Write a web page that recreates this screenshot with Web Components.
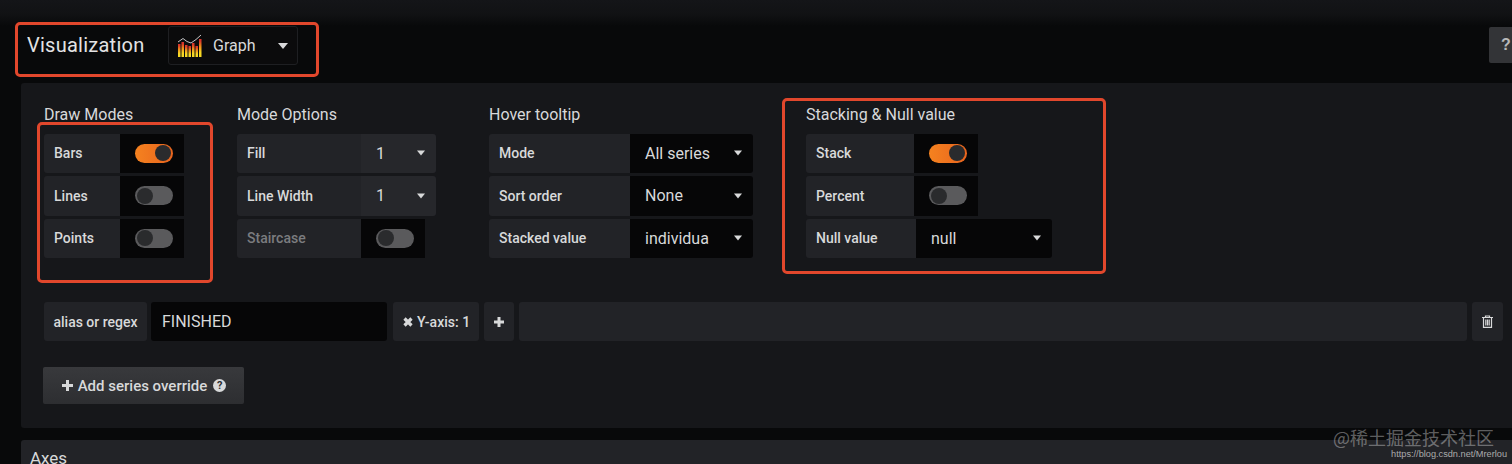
<!DOCTYPE html>
<html>
<head>
<meta charset="utf-8">
<title>Visualization</title>
<style>
  html, body { margin: 0; height: 464px; overflow: hidden; background: #0a0b0c; }
  body { font-family: Roboto, "Noto Sans CJK SC", sans-serif; color: #d8d9da; }
</style>
</head>
<body>
<viz-page>
  <viz-header slot="header"></viz-header>
  <option-panel slot="panel">
    <option-group title="Draw Modes" style="width:193px">
      <switch-row label="Bars" lw="76" on></switch-row>
      <switch-row label="Lines" lw="76"></switch-row>
      <switch-row label="Points" lw="76"></switch-row>
    </option-group>
    <option-group title="Mode Options" style="width:252px">
      <select-row label="Fill" lw="124" vw="75" value="1"></select-row>
      <select-row label="Line Width" lw="124" vw="75" value="1"></select-row>
      <switch-row label="Staircase" lw="124" muted></switch-row>
    </option-group>
    <option-group title="Hover tooltip" style="width:317px">
      <select-row label="Mode" lw="141" vw="123" value="All series" dark></select-row>
      <select-row label="Sort order" lw="141" vw="123" value="None" dark></select-row>
      <select-row label="Stacked value" lw="141" vw="123" value="individua" dark></select-row>
    </option-group>
    <option-group title="Stacking &amp; Null value">
      <switch-row label="Stack" lw="108" on></switch-row>
      <switch-row label="Percent" lw="108"></switch-row>
      <select-row label="Null value" lw="110" vw="136" value="null" dark></select-row>
    </option-group>
    <override-row slot="bottom"></override-row>
    <add-button slot="bottom"></add-button>
  </option-panel>
  <axes-panel slot="axes"></axes-panel>
</viz-page>
<mark-box style="left:15px;top:22px;width:304px;height:55px"></mark-box>
<mark-box style="left:37px;top:122px;width:176px;height:161px"></mark-box>
<mark-box style="left:782px;top:98px;width:324px;height:176px"></mark-box>
<water-mark></water-mark>

<script>
const caret = `<svg width="10" height="6" viewBox="0 0 10 6"><path d="M0 0h10L5 6z" fill="currentColor"/></svg>`;

customElements.define("viz-page", class VizPage extends HTMLElement {
    constructor() {
	super();
	this.attachShadow({ mode: "open" }).innerHTML = `
<style>
  :host { display: flex; flex-direction: column; width: 1512px; height: 464px; overflow: hidden;
	  background: linear-gradient(#141518 0, #111214 14px, #08090a 26px, #08090a 83px); }
  .top { padding: 26px 0 0 0; height: 57px; box-sizing: content-box; }
  .panel { padding-left: 21px; }
  .axes { padding: 12px 0 0 21px; background: #08090a; }
</style>
<div class="top"><slot name="header"></slot></div>
<div class="panel"><slot name="panel"></slot></div>
<div class="axes"><slot name="axes"></slot></div>`;
    }
});

customElements.define("viz-header", class VizHeader extends HTMLElement {
    constructor() {
	super();
	this.attachShadow({ mode: "open" }).innerHTML = `
<style>
  :host { display: flex; align-items: flex-start; height: 57px; padding-left: 27px; }
  h2 { margin: 0; width: 141px; font: 400 20px/39px Roboto, sans-serif; color: #e3e3e4; letter-spacing: .25px; }
  .picker { display: flex; align-items: center; box-sizing: border-box; width: 130px; height: 39px;
	    border: 1px solid #1e1f22; border-radius: 3px; background: #0b0b0c; padding: 0 9px 0 8px; }
  .picker span { flex: 1; margin-left: 10px; font: 400 16px Roboto, sans-serif; color: #d8d9da; }
  .picker svg:last-child { color: #d8d9da; }
  .help { margin-left: auto; width: 23px; height: 36px; margin-top: 1px; background: #333437; border-radius: 2px 0 0 2px;
	  font: 700 16px/36px "Liberation Sans", sans-serif; color: #b8b9ba; padding-left: 12px; box-sizing: border-box; overflow: hidden; }
</style>
<h2>Visualization</h2>
<div class="picker">
  <svg width="26" height="24" viewBox="0 0 26 24">
    <defs><linearGradient id="g" x1="0" y1="0" x2="0" y2="1">
      <stop offset=".1" stop-color="#d8332a"/><stop offset=".4" stop-color="#ee8a1c"/><stop offset=".75" stop-color="#f6d824"/>
    </linearGradient></defs>
    <g fill="url(#g)">
      <rect x="1" y="10" width="2.500" height="13" /><rect x="4.500" y="8" width="2.500" height="15"/>
      <rect x="8" y="11" width="2.500" height="12"/><rect x="11.500" y="12" width="2.500" height="11"/>
      <rect x="15" y="9" width="2.500" height="14"/><rect x="18.500" y="12" width="2.500" height="11"/>
      <rect x="22" y="5" width="2.500" height="18"/>
    </g>
    <path d="M1 8 6 4.500l4 3 4 1.500 5-3.500 5-4.500" fill="none" stroke="#c4c4c6" stroke-width="1"/>
  </svg>
  <span>Graph</span>${caret}
</div>
<div class="help">?</div>`;
    }
});

customElements.define("option-panel", class OptionPanel extends HTMLElement {
    constructor() {
	super();
	this.attachShadow({ mode: "open" }).innerHTML = `
<style>
  :host { display: block; box-sizing: border-box; width: 1491px; height: 345px; padding: 19px 0 0 23px;
	  background: #16171a; border-radius: 3px 0 0 3px; }
  .groups { display: flex; height: 200px; }
</style>
<div class="groups"><slot></slot></div>
<slot name="bottom"></slot>`;
    }
});

customElements.define("option-group", class OptionGroup extends HTMLElement {
    constructor() {
	super();
	this.attachShadow({ mode: "open" }).innerHTML = `
<style>
  :host { display: flex; flex-direction: column; gap: 3px; align-items: flex-start; }
  h5 { margin: 0; font: 400 16px/25px Roboto, sans-serif; color: #d8d9da; height: 28.5px; }
</style>
<h5>${this.getAttribute("title")}</h5>
<slot></slot>`;
    }
});

// shared look of a label cell in the gf-form rows
const rowStyle = `
  :host { display: flex; height: 39.5px; }
  .label { box-sizing: border-box; display: flex; align-items: center; padding-left: 10px; height: 100%;
	   background: #222327; border-radius: 3px 0 0 3px; font: 500 14px Roboto, sans-serif; color: #d8d9da; }
`;

customElements.define("switch-row", class SwitchRow extends HTMLElement {
    constructor() {
	super();
	const on = this.hasAttribute("on"), muted = this.hasAttribute("muted");
	this.attachShadow({ mode: "open" }).innerHTML = `
<style>
  ${rowStyle}
  .label.muted { color: #7b7c7f; }
  .box { box-sizing: border-box; display: flex; align-items: center; padding-left: 15px; width: 64px; height: 100%; background: #060607; }
  .track { box-sizing: border-box; display: flex; align-items: center; width: 37.5px; height: 19px; border-radius: 10px;
	   background: #5a5a5c; padding: 1.5px; }
  .track.on { background: linear-gradient(90deg, #f5821f, #e8641e); justify-content: flex-end; }
  .knob { width: 16px; height: 16px; border-radius: 50%; background: #2a2b2d; }
</style>
<div class="label ${muted ? "muted" : ""}" style="width:${this.getAttribute("lw")}px">${this.getAttribute("label")}</div>
<div class="box"><div class="track ${on ? "on" : ""}"><div class="knob"></div></div></div>`;
    }
});

customElements.define("select-row", class SelectRow extends HTMLElement {
    constructor() {
	super();
	const dark = this.hasAttribute("dark");
	this.attachShadow({ mode: "open" }).innerHTML = `
<style>
  ${rowStyle}
  .value { box-sizing: border-box; display: flex; align-items: center; justify-content: space-between; height: 100%;
	   padding: 0 11px 0 15px; background: ${dark ? "#060607" : "#26272b"}; border-radius: 0 3px 3px 0;
	   font: 400 16px Roboto, sans-serif; color: #d8d9da; }
  .value svg { width: 8px; flex: none; }
</style>
<div class="label" style="width:${this.getAttribute("lw")}px">${this.getAttribute("label")}</div>
<div class="value" style="width:${this.getAttribute("vw")}px"><span>${this.getAttribute("value")}</span>${caret}</div>`;
    }
});

customElements.define("override-row", class OverrideRow extends HTMLElement {
    constructor() {
	super();
	this.attachShadow({ mode: "open" }).innerHTML = `
<style>
  :host { display: flex; width: 1459px; height: 39px; margin-top: 0; gap: 5px; font: 500 14px Roboto, sans-serif; color: #d8d9da; }
  div { box-sizing: border-box; display: flex; align-items: center; justify-content: center; background: #222327; border-radius: 3px; flex: none; }
  .input { width: 236px; margin-left: -1px; background: #060607; justify-content: flex-start; padding-left: 11px; font: 400 16px Roboto, sans-serif; }
  .yaxis { gap: 3px; width: 86px; margin-left: 1px; }
  .fill { flex: 1; }
</style>
<div style="width:103px">alias or regex</div>
<div class="input">FINISHED</div>
<div class="yaxis"><svg width="12" height="12" viewBox="0 0 12 12"><path d="M2.500 2.500l7 7M9.500 2.500l-7 7" stroke="#d8d9da" stroke-width="3.200"/></svg>Y-axis: 1</div>
<div style="width:30px"><svg width="12" height="12" viewBox="0 0 12 12"><path d="M6 1v10M1 6h10" stroke="#d8d9da" stroke-width="3"/></svg></div>
<div class="fill"></div>
<div style="width:31px"><svg width="11" height="13" viewBox="0 0 11 13"><path d="M0 2.500h11M3.500 2.500V1h4v1.500M1.500 3v9.300h8V3M3.800 4.500v6M5.500 4.500v6M7.200 4.500v6" fill="none" stroke="#d8d9da" stroke-width="1.200"/></svg></div>`;
    }
});

customElements.define("add-button", class AddButton extends HTMLElement {
    constructor() {
	super();
	this.attachShadow({ mode: "open" }).innerHTML = `
<style>
  :host { display: flex; align-items: center; justify-content: center; gap: 4px; box-sizing: border-box; width: 201px; height: 37px;
	  margin: 26px 0 0 -1px; background: linear-gradient(#38393c, #2d2e31); border-radius: 2px;
	  font: 500 15px Roboto, sans-serif; color: #d8d9da; }
  .q { display: inline-block; width: 13px; height: 13px; border-radius: 50%; background: #d8d9da; color: #2d2e31; margin-left: 2px;
       font: 700 11px/13px Roboto, sans-serif; text-align: center; }
</style>
<svg width="13" height="13" viewBox="0 0 13 13"><path d="M6.500 1v11M1 6.500h11" stroke="#d8d9da" stroke-width="3"/></svg>
<span>Add series override</span>
<span class="q">?</span>`;
    }
});

customElements.define("axes-panel", class AxesPanel extends HTMLElement {
    constructor() {
	super();
	this.attachShadow({ mode: "open" }).innerHTML = `
<style>
  :host { display: block; height: 40px; padding: 8px 0 0 9px; background: #222327; border-radius: 3px 0 0 0;
	  font: 400 17px/20px Roboto, sans-serif; color: #d8d9da; }
</style>
Axes`;
    }
});

// the red annotation rectangles drawn over the screenshot
customElements.define("mark-box", class MarkBox extends HTMLElement {
    constructor() {
	super();
	this.attachShadow({ mode: "open" }).innerHTML = `
<style>
  :host { position: absolute; box-sizing: border-box; border: 3px solid #e1472c; border-radius: 5px; }
</style>`;
    }
});

customElements.define("water-mark", class WaterMark extends HTMLElement {
    constructor() {
	super();
	this.attachShadow({ mode: "open" }).innerHTML = `
<style>
  :host { position: absolute; right: 5px; top: 426px; text-align: right; }
  .a { font: 400 18px/22px "Noto Sans CJK SC", sans-serif; color: rgba(255,255,255,.36); margin-right: 13px; }
  .b { font: 400 9.200px/12px "Liberation Sans", sans-serif; color: rgba(255,255,255,.62); }
</style>
<div class="a">@稀土掘金技术社区</div>
<div class="b">https://blog.csdn.net/Mrerlou</div>`;
    }
});
</script>
</body>
</html>
